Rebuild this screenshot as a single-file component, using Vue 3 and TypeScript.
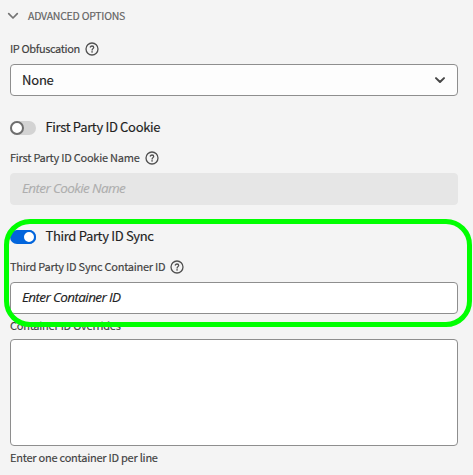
<script setup lang="ts">
import { ref } from 'vue'

const firstParty = ref<boolean>(false)
const thirdParty = ref<boolean>(true)
const cookieName = ref<string>('')
const containerId = ref<string>('')
const overrides = ref<string>('')
</script>

<template>
  <main class="panel">
    <header class="heading">
      <svg class="heading-chevron" width="12" height="8" viewBox="0 0 12 8">
        <path d="M1.7 1.7 6 6l4.300-4.300" />
      </svg>
      <span>ADVANCED OPTIONS</span>
    </header>

    <div class="label">
      <span class="ip-text">IP Obfuscation</span>
      <svg class="help" width="14" height="14" viewBox="0 0 14 14">
        <circle cx="7" cy="7" r="6" />
        <path d="M5.300 5.100C5.600 4.300 6.200 4 7 4c1 0 1.700.5 1.700 1.400 0 1.200-1.600 1.300-1.600 2.700" />
        <circle class="dot" cx="7.050" cy="9.900" r=".8" />
      </svg>
    </div>
    <button class="field select" type="button">
      <span>None</span>
      <svg class="select-chevron" width="12" height="8" viewBox="0 0 12 8">
        <path d="M2 2.100 6 6l4-3.900" />
      </svg>
    </button>

    <div class="toggle-row first">
      <button class="switch" :class="{ on: firstParty }" type="button" @click="firstParty = !firstParty"><i class="knob"></i></button>
      <span class="toggle-text">First Party ID Cookie</span>
    </div>
    <div class="label">
      <span>First Party ID Cookie Name</span>
      <svg class="help" width="14" height="14" viewBox="0 0 14 14">
        <circle cx="7" cy="7" r="6" />
        <path d="M5.300 5.100C5.600 4.300 6.200 4 7 4c1 0 1.700.5 1.700 1.400 0 1.200-1.600 1.300-1.600 2.700" />
        <circle class="dot" cx="7.050" cy="9.900" r=".8" />
      </svg>
    </div>
    <input v-model="cookieName" class="field text muted" placeholder="Enter Cookie Name" disabled />

    <section class="sync">
      <div class="toggle-row">
        <button class="switch" :class="{ on: thirdParty }" type="button" @click="thirdParty = !thirdParty"><i class="knob"></i></button>
        <span class="toggle-text">Third Party ID Sync</span>
      </div>
      <div class="label">
        <span>Third Party ID Sync Container ID</span>
        <svg class="help" width="14" height="14" viewBox="0 0 14 14">
          <circle cx="7" cy="7" r="6" />
          <path d="M5.300 5.100C5.600 4.300 6.200 4 7 4c1 0 1.700.5 1.700 1.400 0 1.200-1.600 1.300-1.600 2.700" />
          <circle class="dot" cx="7.050" cy="9.900" r=".8" />
        </svg>
      </div>
      <input v-model="containerId" class="field text" placeholder="Enter Container ID" />
      <div class="highlight"></div>
    </section>

    <div class="overrides-label">Container ID Overrides</div>
    <textarea v-model="overrides" class="area"></textarea>
    <div class="hint">Enter one container ID per line</div>
  </main>
</template>

<style>
body {
  background: #f4f4f4;
}
</style>

<style scoped>
.panel {
  box-sizing: border-box;
  width: 473px;
  height: 475px;
  padding: 6px 15px 0 10px;
  overflow: hidden;
  display: flex;
  flex-direction: column;
  background: #f4f4f4;
  color: #404040;
  font-family: "Noto Sans CJK SC", "Noto Sans", sans-serif;
  font-size: 11px;
  letter-spacing: -0.24px;
  white-space: nowrap;
  -webkit-text-stroke: 0.15px currentColor;
}
.heading {
  display: flex;
  align-items: center;
  gap: 9px;
  height: 20px;
  margin: 0 0 13px -3px;
  color: #626262;
  font-size: 10.5px;
  line-height: 20px;
}
svg {
  display: block;
  flex: none;
  fill: none;
  stroke: #505050;
  stroke-linecap: round;
  stroke-linejoin: round;
}
.heading-chevron {
  stroke: #747474;
  stroke-width: 1.7;
}
.label {
  display: flex;
  align-items: center;
  gap: 5px;
  height: 20px;
  margin-bottom: 5px;
  line-height: 18px;
}
.label span {
  padding-bottom: 2px;
}
.ip-text {
  letter-spacing: -0.38px;
}
.help {
  stroke-width: 1.300;
}
.dot {
  fill: #505050;
  stroke: none;
}
.field {
  box-sizing: border-box;
  width: 448px;
  height: 32px;
  margin: 0;
  padding: 0 11px;
  border: 1px solid #8e8e8e;
  border-radius: 4px;
  outline: none;
  background: #fff;
  color: #222;
  font-family: inherit;
  font-size: 13px;
  line-height: 30px;
}
.select {
  display: flex;
  align-items: center;
  justify-content: space-between;
  background: #fdfdfd;
  letter-spacing: -0.2px;
}
.select-chevron {
  stroke: #464646;
  stroke-width: 2;
}
.text {
  padding: 0 11px 3px;
  font-family: "Open Sans", sans-serif;
  font-size: 13.5px;
}
.text::placeholder {
  color: #222;
  opacity: 1;
  font-style: italic;
  letter-spacing: -0.62px;
}
.muted {
  border-color: #e6e6e6;
  background: #e6e6e6;
}
.muted::placeholder {
  color: #aeaeae;
}
.toggle-row {
  display: flex;
  align-items: center;
  gap: 9.5px;
  height: 20px;
  margin-bottom: 10px;
  color: #222;
  font-size: 13px;
  letter-spacing: -0.33px;
  line-height: 20px;
}
.toggle-text {
  padding-bottom: 2px;
}
.first {
  margin-top: 22px;
}
.switch {
  box-sizing: border-box;
  display: flex;
  flex: none;
  width: 26px;
  height: 14px;
  padding: 0;
  border: 0;
  border-radius: 7px;
  background: #d3d3d3;
}
.knob {
  box-sizing: border-box;
  width: 14px;
  height: 14px;
  border: 2px solid #6e6e6e;
  border-radius: 50%;
  background: #fff;
}
.switch.on {
  justify-content: flex-end;
  background: #0265dc;
}
.switch.on .knob {
  border-color: #0265dc;
}
.sync {
  position: relative;
  z-index: 1;
  margin-top: 22px;
}
.highlight {
  position: absolute;
  inset: -8px -14px -13px -6px;
  border: 5px solid #00ff00;
  border-radius: 26px;
  pointer-events: none;
}
.overrides-label {
  height: 20px;
  margin: 2px 0 3px;
  line-height: 18px;
}
.area {
  box-sizing: border-box;
  display: block;
  width: 448px;
  height: 107px;
  margin: 0;
  padding: 8px 11px;
  border: 1px solid #8e8e8e;
  border-radius: 4px;
  outline: none;
  resize: none;
  background: #fff;
  font: inherit;
}
.hint {
  height: 20px;
  margin-top: 2px;
  line-height: 18px;
}
</style>
